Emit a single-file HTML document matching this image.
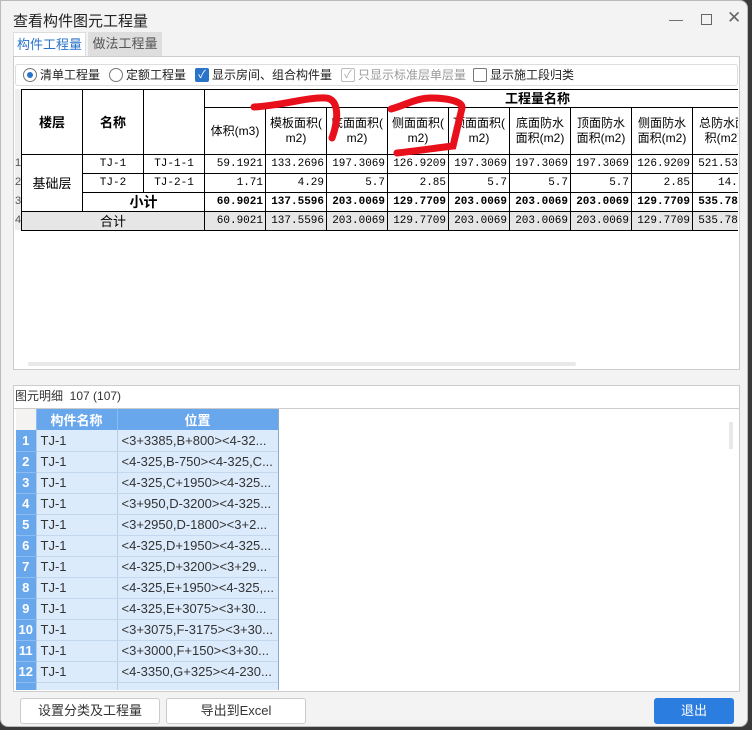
<!DOCTYPE html>
<html><head><meta charset="utf-8"><style>
*{margin:0;padding:0;box-sizing:border-box}
body{width:752px;height:730px;overflow:hidden;background:#3a3a3a;font-family:"Liberation Sans","Noto Sans CJK SC",sans-serif;position:relative}
.win{position:absolute;left:0;top:0;width:748px;height:727px;background:#f3f3f3;border-radius:0 8px 8px 8px;border:1px solid #bbb}
.abs{position:absolute}
.title{left:12px;top:9px;font-size:15px;color:#222}
.tab{top:31px;height:24px;font-size:13px;line-height:24px;text-align:center}
table{border-collapse:collapse;table-layout:fixed}
.t1 td{border:1px solid #000;font-size:11px;height:19px;line-height:17px;padding:0 2px;white-space:nowrap;overflow:hidden;font-family:"Liberation Mono","Noto Sans CJK SC",monospace;text-align:right}
.t1 .c{text-align:center}
.t1 .h{font-family:"Liberation Sans","Noto Sans CJK SC",sans-serif;text-align:center;line-height:15px;font-size:12px}
.t1 b{font-weight:bold}
.t2 td{height:21px;font-size:13px;border-right:1px solid #b9cfe8;border-bottom:1px solid #c3d8ef;background:#dcebfc;padding-left:4px;white-space:nowrap;overflow:hidden;color:#333}
.t2 td.n{background:#69a7ec;color:#fff;font-weight:bold;text-align:center;padding:0;border-bottom:1px solid #8bbcf2}
.t2 th{height:21px;background:#69a7ec;color:#fff;font-size:13px;border-right:1px solid #8bbcf2}
.btn{top:697px;height:26px;border:1px solid #ccc;background:#fff;border-radius:3px;font-size:13px;text-align:center;line-height:24px;color:#333}
.opt{font-size:12px}
</style></head><body>
<div class="win">
<div class="abs title">查看构件图元工程量</div>
<div class="abs" style="left:668px;top:10px;font-size:14px;color:#666">—</div>
<div class="abs" style="left:700px;top:13px;width:11px;height:11px;border:1px solid #666"></div>
<div class="abs" style="left:726px;top:7px;font-size:17px;color:#666">✕</div>
<div class="abs tab" style="left:12px;width:73px;background:#fff;color:#2a73c9;border:1px solid #ddd;border-bottom:none">构件工程量</div>
<div class="abs tab" style="left:87px;width:74px;background:#dedede;color:#555">做法工程量</div>
<div class="abs" style="left:12px;top:55px;width:727px;height:314px;background:#fff;border:1px solid #ccc"></div>
<div class="abs" style="left:14px;top:63px;width:723px;height:22px;border:1px solid #ddd;border-radius:3px;line-height:20px;color:#222">
 <span class="abs" style="left:7px;top:3px;width:14px;height:14px;border:1px solid #777;border-radius:50%"></span><span class="abs" style="left:11px;top:7px;width:6px;height:6px;background:#2a73c9;border-radius:50%"></span>
 <span class="abs opt" style="left:24px">清单工程量</span>
 <span class="abs" style="left:93px;top:3px;width:14px;height:14px;border:1px solid #777;border-radius:50%"></span>
 <span class="abs opt" style="left:110px">定额工程量</span>
 <span class="abs" style="left:179px;top:3px;width:14px;height:14px;background:#2a73c9;border-radius:2px;color:#fff;font-size:11px;line-height:14px;text-align:center">✓</span>
 <span class="abs opt" style="left:196px">显示房间、组合构件量</span>
 <span class="abs" style="left:325px;top:3px;width:14px;height:14px;border:1px solid #bbb;border-radius:2px;color:#aaa;font-size:11px;line-height:13px;text-align:center">✓</span>
 <span class="abs opt" style="left:342px;color:#999">只显示标准层单层量</span>
 <span class="abs" style="left:457px;top:3px;width:14px;height:14px;border:1px solid #777;border-radius:2px"></span>
 <span class="abs opt" style="left:474px">显示施工段归类</span>
</div>
<div class="abs" style="left:14px;top:88px;width:6px;height:141px;background:#eee;font-size:11px;color:#555;overflow:hidden;line-height:19px">
<div style="height:65px"></div><div>1</div><div>2</div><div>3</div><div style="height:19px">4</div></div>
<div class="abs" style="left:20px;top:88px;width:717px;overflow:hidden">
<table class="t1" style="width:793px">
<colgroup><col style="width:61px"><col style="width:61px"><col style="width:61px"><col style="width:61px"><col style="width:61px"><col style="width:61px"><col style="width:61px"><col style="width:61px"><col style="width:61px"><col style="width:61px"><col style="width:61px"><col style="width:61px"><col style="width:61px"></colgroup>
<tr style="height:18px"><td rowspan="2" class="h" style="font-weight:bold;font-size:13px">楼层</td><td rowspan="2" class="h" style="font-weight:bold;font-size:13px">名称</td><td rowspan="2"></td><td colspan="10" class="h" style="height:18px;font-weight:bold;font-size:13px;text-align:left;padding-left:300px">工程量名称</td></tr>
<tr style="height:47px"><td class="h">体积(m3)</td><td class="h">模板面积(<br>m2)</td><td class="h">底面面积(<br>m2)</td><td class="h">侧面面积(<br>m2)</td><td class="h">顶面面积(<br>m2)</td><td class="h">底面防水<br>面积(m2)</td><td class="h">顶面防水<br>面积(m2)</td><td class="h">侧面防水<br>面积(m2)</td><td class="h">总防水面<br>积(m2)</td><td></td></tr>
<tr><td rowspan="3" class="h" style="font-size:13px">基础层</td><td class="c">TJ-1</td><td class="c">TJ-1-1</td><td>59.1921</td><td>133.2696</td><td>197.3069</td><td>126.9209</td><td>197.3069</td><td>197.3069</td><td>197.3069</td><td>126.9209</td><td>521.5355</td><td></td></tr>
<tr><td class="c">TJ-2</td><td class="c">TJ-2-1</td><td>1.71</td><td>4.29</td><td>5.7</td><td>2.85</td><td>5.7</td><td>5.7</td><td>5.7</td><td>2.85</td><td>14.25</td><td></td></tr>
<tr><td colspan="2" class="h" style="font-weight:bold;font-size:14px">小计</td><td><b>60.9021</b></td><td><b>137.5596</b></td><td><b>203.0069</b></td><td><b>129.7709</b></td><td><b>203.0069</b></td><td><b>203.0069</b></td><td><b>203.0069</b></td><td><b>129.7709</b></td><td><b>535.7847</b></td><td></td></tr>
<tr style="background:#e6e6e6"><td colspan="3" class="h" style="font-size:13px">合计</td><td>60.9021</td><td>137.5596</td><td>203.0069</td><td>129.7709</td><td>203.0069</td><td>203.0069</td><td>203.0069</td><td>129.7709</td><td>535.7847</td><td></td></tr>
</table></div>
<div class="abs" style="left:27px;top:361px;width:548px;height:4px;background:#e8e8e8;border-radius:2px"></div>
<svg class="abs" style="left:0;top:0" width="752" height="200"><path d="M253 106 C285 104 305 96 325 97 C338 98 338 118 331 137" stroke="#e8101a" stroke-width="7" fill="none" stroke-linecap="round"/><path d="M390 108 C405 104 415 97 430 97 C445 97 462 100 461 107 C458 120 455 132 452 145 C435 147 415 150 396 152" stroke="#e8101a" stroke-width="7" fill="none" stroke-linecap="round"/></svg>
<div class="abs" style="left:12px;top:384px;width:727px;height:307px;background:#fff;border:1px solid #ccc"></div>
<div class="abs" style="left:12px;top:407px;width:727px;height:1px;background:#ccc"></div>
<div class="abs" style="left:14px;top:386px;font-size:12px;color:#333">图元明细 &nbsp;107 (107)</div>
<div class="abs" style="left:728px;top:421px;width:4px;height:27px;background:#e8e8e8"></div>
<div class="abs" style="left:15px;top:408px;width:263px;height:281px;overflow:hidden;background:#dcebfc">
<table class="t2" style="width:262px"><colgroup><col style="width:20px"><col style="width:81px"><col style="width:161px"></colgroup>
<tr><th style="background:#f5f2f2"></th><th>构件名称</th><th>位置</th></tr>
<tr><td class="n">1</td><td>TJ-1</td><td>&lt;3+3385,B+800&gt;&lt;4-32...</td></tr>
<tr><td class="n">2</td><td>TJ-1</td><td>&lt;4-325,B-750&gt;&lt;4-325,C...</td></tr>
<tr><td class="n">3</td><td>TJ-1</td><td>&lt;4-325,C+1950&gt;&lt;4-325...</td></tr>
<tr><td class="n">4</td><td>TJ-1</td><td>&lt;3+950,D-3200&gt;&lt;4-325...</td></tr>
<tr><td class="n">5</td><td>TJ-1</td><td>&lt;3+2950,D-1800&gt;&lt;3+2...</td></tr>
<tr><td class="n">6</td><td>TJ-1</td><td>&lt;4-325,D+1950&gt;&lt;4-325...</td></tr>
<tr><td class="n">7</td><td>TJ-1</td><td>&lt;4-325,D+3200&gt;&lt;3+29...</td></tr>
<tr><td class="n">8</td><td>TJ-1</td><td>&lt;4-325,E+1950&gt;&lt;4-325,...</td></tr>
<tr><td class="n">9</td><td>TJ-1</td><td>&lt;4-325,E+3075&gt;&lt;3+30...</td></tr>
<tr><td class="n">10</td><td>TJ-1</td><td>&lt;3+3075,F-3175&gt;&lt;3+30...</td></tr>
<tr><td class="n">11</td><td>TJ-1</td><td>&lt;3+3000,F+150&gt;&lt;3+30...</td></tr>
<tr><td class="n">12</td><td>TJ-1</td><td>&lt;4-3350,G+325&gt;&lt;4-230...</td></tr>
<tr><td class="n"></td><td></td><td></td></tr>
</table>
<div class="abs" style="left:262px;top:0;width:2px;height:281px;background:#8aa9cc"></div>
</div>
<div class="abs btn" style="left:19px;width:140px">设置分类及工程量</div>
<div class="abs btn" style="left:165px;width:140px">导出到Excel</div>
<div class="abs btn" style="left:653px;width:80px;background:#2b7de0;border-color:#2b7de0;color:#fff">退出</div>
</div>
</body></html>
